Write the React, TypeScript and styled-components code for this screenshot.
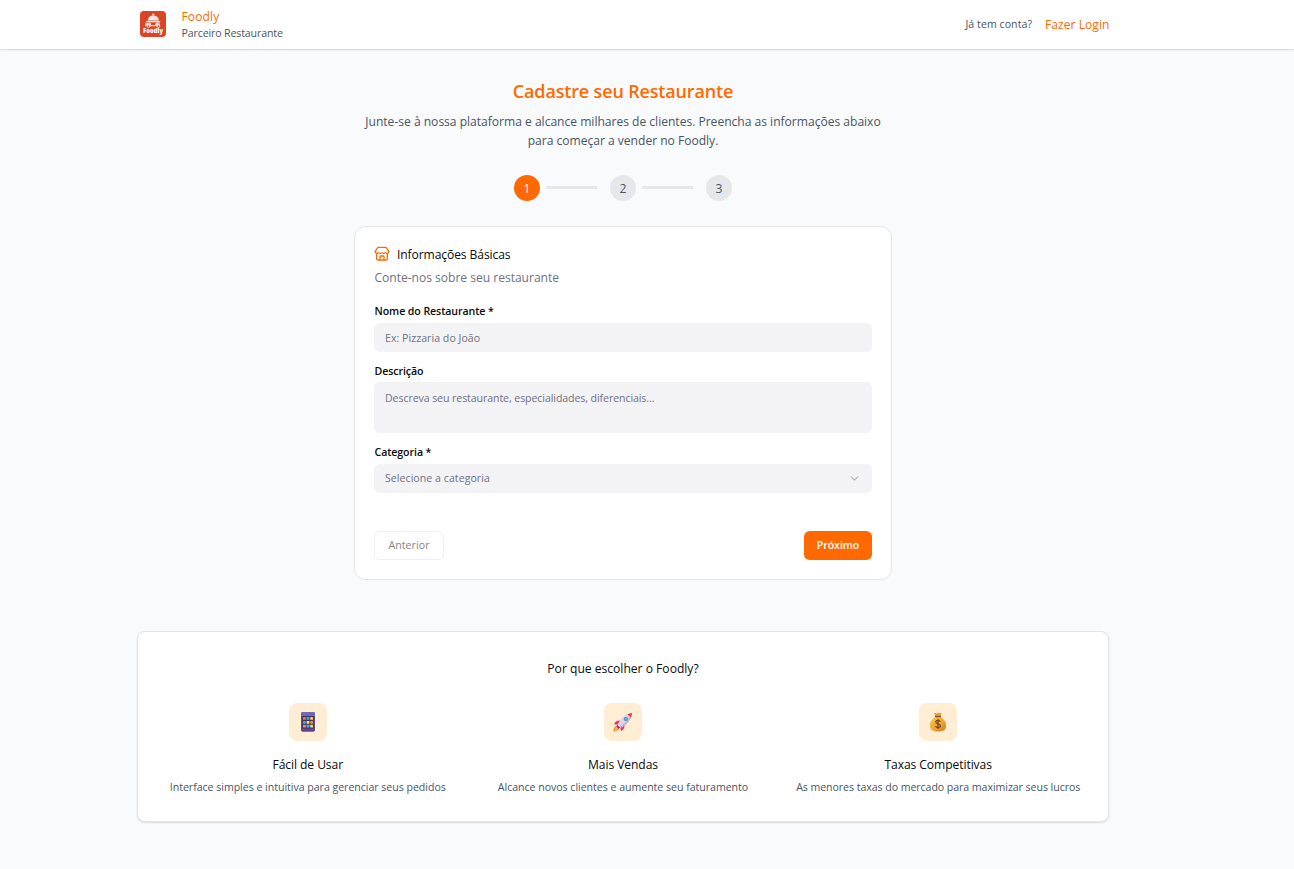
import React from "react";
import styled, { createGlobalStyle } from "styled-components";
import { ChevronDown, Store } from "lucide-react";

const Global = createGlobalStyle`
  *, *::before, *::after { box-sizing: border-box; }
  body {
    margin: 0;
    background: #f9fafb;
    color: #0a0a0a;
    font-family: "Open Sans", "Noto Sans", sans-serif;
    font-size: 12.1px;
    line-height: 19.2px;
  }
  h1, h2, h3, p { margin: 0; font-weight: 400; font-size: inherit; }
  input, textarea, button { font-family: inherit; }
`;

const Page = styled.div`
  min-height: 869px;
  background: #f9fafb;
`;

const Header = styled.header`
  height: 49px;
  padding: 0 184.5px 0 140px;
  background: #fff;
  box-shadow: 0 1px 2px rgba(0, 0, 0, 0.1), 0 1px 1px rgba(0, 0, 0, 0.04);
  display: flex;
  align-items: center;
  justify-content: space-between;

  svg { margin-top: -1px; }
`;

const Brand = styled.div`
  display: flex;
  align-items: center;
  gap: 15.5px;
`;

const BrandName = styled.h1`
  color: #ff6900;
  line-height: 17px;
  letter-spacing: 0.1px;
`;

const Small = styled.p<{ $spacing?: number }>`
  font-size: 10.6px;
  line-height: 16px;
  color: #4a5565;
  letter-spacing: ${(p) => p.$spacing ?? 0}px;
`;

const Account = styled.div`
  display: flex;
  align-items: center;
  gap: 13px;
`;

const LoginLink = styled.a`
  color: #ff6900;
  letter-spacing: 0.03px;
`;

const Main = styled.main`
  width: 1246px;
  padding: 32px 137px 0;
  display: flex;
  flex-direction: column;
  align-items: center;
`;

const Title = styled.h2`
  font-size: 18px;
  line-height: 20px;
  font-weight: 600;
  letter-spacing: -0.16px;
  color: #ff6900;
`;

const Intro = styled.p`
  width: 538px;
  margin-top: 11px;
  text-align: center;
  letter-spacing: -0.02px;
  color: #4a5565;
`;

const Steps = styled.div`
  display: flex;
  align-items: center;
  margin-top: 25px;
`;

const Step = styled.div<{ $active?: boolean }>`
  width: 26px;
  height: 26px;
  border-radius: 50%;
  display: flex;
  align-items: center;
  justify-content: center;
  background: ${(p) => (p.$active ? "#ff6900" : "#e5e7eb")};
  color: ${(p) => (p.$active ? "#fff" : "#4a5565")};
`;

const StepLine = styled.div`
  width: 51px;
  height: 3px;
  margin: 0 13px 1px 6px;
  background: #e5e7eb;
`;

const FormCard = styled.section`
  width: 538px;
  height: 354px;
  margin-top: 25px;
  padding: 18px 19px 19px;
  border: 1px solid #e5e5e6;
  border-radius: 11.2px;
  background: #fff;
  display: flex;
  flex-direction: column;
`;

const CardTitle = styled.h3`
  display: flex;
  align-items: center;
  gap: 7px;
  line-height: 19px;
  letter-spacing: -0.1px;

  svg { color: #ff6900; margin-top: -1px; }
`;

const CardNote = styled.p`
  margin-top: 4px;
  letter-spacing: -0.03px;
  padding-left: 0.5px;
  color: #717182;
`;

const Field = styled.div<{ $top: number; $gap?: number }>`
  display: flex;
  flex-direction: column;
  gap: ${(p) => p.$gap ?? 6}px;
  margin-top: ${(p) => p.$top}px;
`;

const Label = styled.label`
  font-size: 10.6px;
  line-height: 12px;
  font-weight: 600;
  padding-left: 0.5px;
  letter-spacing: -0.08px;
`;

const Input = styled.input`
  height: 29px;
  padding: 1px 11px 0;
  border: 0;
  border-radius: 5.6px;
  background: #f3f3f5;
  font-size: 10.6px;
  &::placeholder { color: #717182; opacity: 1; letter-spacing: 0.03px; }
`;

const TextArea = styled.textarea`
  height: 51px;
  padding: 8px 11px;
  border: 0;
  border-radius: 5.6px;
  background: #f3f3f5;
  resize: none;
  font-size: 10.6px;
  line-height: 16px;
  &::placeholder { color: #717182; opacity: 1; letter-spacing: -0.09px; }
`;

const Select = styled.div`
  height: 29px;
  padding: 0 11px;
  border-radius: 5.6px;
  background: #f3f3f5;
  display: flex;
  align-items: center;
  justify-content: space-between;
  font-size: 10.6px;
  letter-spacing: 0.04px;
  color: #717182;

  svg { opacity: 0.5; }
`;

const Actions = styled.div`
  display: flex;
  justify-content: space-between;
  margin-top: auto;
`;

const Button = styled.button<{ $primary?: boolean }>`
  width: ${(p) => (p.$primary ? 68 : 70)}px;
  height: 29px;
  padding: 0 0 1px;
  border-radius: 5.6px;
  border: ${(p) => (p.$primary ? "0" : "1px solid #f0f0f0")};
  background: ${(p) => (p.$primary ? "#ff6900" : "#fff")};
  color: ${(p) => (p.$primary ? "#fff" : "#848484")};
  font-size: 10.6px;
  font-weight: ${(p) => (p.$primary ? 600 : 500)};
  letter-spacing: ${(p) => (p.$primary ? -0.08 : 0.05)}px;
`;

const Benefits = styled.section`
  width: 972px;
  height: 191px;
  margin-top: 51px;
  padding: 27px 25px;
  border: 1px solid #e4e5e7;
  border-radius: 8px;
  background: #fff;
  box-shadow: 0 1px 2px rgba(0, 0, 0, 0.12);
  text-align: center;
`;

const BenefitGrid = styled.div`
  display: grid;
  grid-template-columns: repeat(3, 1fr);
  gap: 25.6px;
  margin-top: 24px;
`;

const Benefit = styled.div`
  display: flex;
  flex-direction: column;
  align-items: center;
  white-space: nowrap;
`;

const IconTile = styled.div`
  width: 38px;
  height: 38px;
  border-radius: 8px;
  background: #ffedd4;
  display: flex;
  align-items: center;
  justify-content: center;
  margin-bottom: 14px;
`;

const BenefitTitle = styled.h3`
  margin-bottom: 5px;
  letter-spacing: -0.08px;
`;

const Logo = () => (
  <svg width="26" height="26" viewBox="0 0 26 26">
    <rect width="26" height="26" rx="4" fill="#dc4426" />
    <circle cx="13.3" cy="3.6" r="1" fill="#fff" />
    <path d="M7.700 9.600a5.500 5.300 0 0 1 11.200 0z" fill="#fbe6e0" />
    <path d="M6.200 10h14v1.200h-14z" fill="#fff" />
    <path d="M5.500 11.700h5.500v2.300h3.700l1.600-2.500h3l1 3.800h-15z" fill="#f8d5cb" />
    <circle cx="8.600" cy="15.200" r="1.300" fill="#dc4426" stroke="#fff" strokeWidth=".8" />
    <circle cx="18.400" cy="15.200" r="1.300" fill="#dc4426" stroke="#fff" strokeWidth=".8" />
    <text x="13" y="22" textAnchor="middle" textLength="20" lengthAdjust="spacingAndGlyphs" fontSize="6.500" fontWeight="800" fill="#fff">Foodly</text>
  </svg>
);

const keyColors = ["#f4743b", "#21b5ee", "#fbd149", "#21b5ee", "#ffe35c", "#f98b3c", "#f98b5c", "#21c4f4", "#ffd84a"];

const PhoneIcon = () => (
  <svg width="20" height="20" viewBox="0 0 20 20">
    <rect x="3" y=".3" width="14" height="19.2" rx="1.4" fill="#5c4a8e" />
    <path d="M4.4.3h11.2A1.4 1.4 0 0 1 17 1.7V4H3V1.700A1.400 1.400 0 0 1 4.400.3z" fill="#6f68b8" />
    <rect x="4.300" y="4" width="11.400" height="12.500" fill="#46325f" />
    <path d="M3 17h14v1.100a1.400 1.400 0 0 1-1.400 1.400H4.400A1.400 1.400 0 0 1 3 18.100z" fill="#6c3f94" />
    {keyColors.map((color, i) => (
      <rect key={i} x={5 + (i % 3) * 3.6} y={5 + Math.floor(i / 3) * 3.9} width="2.800" height="2.800" rx=".4" fill={color} />
    ))}
  </svg>
);

const RocketIcon = () => (
  <svg width="20" height="20" viewBox="0 0 20 20">
    <path d="M4.300 13.500C1.500 14 .5 16 .3 19.400c3.200 0 5.400-1 6-3.300z" fill="#f9923b" />
    <path d="M4.500 14.500c-1.600.6-2.300 1.700-2.500 3.200 1.500-.2 2.600-.7 3.300-2z" fill="#ffc247" />
    <path d="M7.300 8.600C4 8.500 2.200 9.600 1 12.200l4.600.6z" fill="#e8366b" />
    <path d="M11.500 12.800c.2 3.100-.8 5.100-3.500 6.400l-.8-4.900z" fill="#e8366b" />
    <path d="M4.500 13.200C6.400 7.500 11 2.200 19 .9c-.7 7.600-6.300 12.900-12 15z" fill="#dcd5e5" />
    <path d="M5.200 15C9.500 13.800 15.200 8.500 19 .9c-.7 7.600-6.300 12.900-12 15z" fill="#bfb3ce" />
    <path d="M14.300 2.300C15.800 1.500 17.300 1 19 .9c-.1 1.700-.5 3.200-1.100 4.600z" fill="#ee3457" />
    <path d="M4.300 12.700l3.200 3.200-2.100.9-2-2z" fill="#c62b63" />
    <circle cx="12.800" cy="7" r="2.100" fill="#4d7db5" />
    <circle cx="12.800" cy="7" r="1.300" fill="#55b7ed" />
  </svg>
);

const MoneyIcon = () => (
  <svg width="20" height="20" viewBox="0 0 20 20">
    <defs>
      <linearGradient id="bag" x1="0" y1="0" x2="1" y2="1">
        <stop offset="0" stopColor="#ffc83f" />
        <stop offset=".6" stopColor="#eea32c" />
        <stop offset="1" stopColor="#cc7429" />
      </linearGradient>
    </defs>
    <path d="M6 1.400c1.300-.7 2.200.1 3.400-.5 1.300-.6 2.300.2 4.500.1L12.600 4H7.300z" fill="#eda435" />
    <path d="M7.600 4.800h4.800c3.200 1.700 5.600 5 5.600 8.900 0 4.200-3 5.700-8 5.700s-8-1.500-8-5.700c0-3.900 2.400-7.200 5.600-8.900z" fill="url(#bag)" />
    <rect x="6.900" y="3.700" width="6.200" height="1.600" rx=".7" fill="#875044" />
    <path d="M12.300 9.700c-.4-.9-1.200-1.300-2.300-1.300-1.300 0-2.200.6-2.200 1.700 0 2.500 4.600 1.100 4.600 3.600 0 1.100-1 1.800-2.300 1.800-1.300 0-2.200-.5-2.600-1.500M10 7v10" fill="none" stroke="#6e4738" strokeWidth="1.200" />
  </svg>
);

const benefits = [
  { icon: <PhoneIcon />, title: "Fácil de Usar", text: "Interface simples e intuitiva para gerenciar seus pedidos", spacing: -0.03 },
  { icon: <RocketIcon />, title: "Mais Vendas", text: "Alcance novos clientes e aumente seu faturamento", spacing: -0.03 },
  { icon: <MoneyIcon />, title: "Taxas Competitivas", text: "As menores taxas do mercado para maximizar seus lucros", spacing: -0.06 },
];

export default function App() {
  return (
    <Page>
      <Global />
      <Header>
        <Brand>
          <Logo />
          <div>
            <BrandName>Foodly</BrandName>
            <Small $spacing={-0.13}>Parceiro Restaurante</Small>
          </div>
        </Brand>
        <Account>
          <Small $spacing={0.05}>Já tem conta?</Small>
          <LoginLink>Fazer Login</LoginLink>
        </Account>
      </Header>
      <Main>
        <Title>Cadastre seu Restaurante</Title>
        <Intro>
          Junte-se à nossa plataforma e alcance milhares de clientes. Preencha as informações abaixo
          <br />
          para começar a vender no Foodly.
        </Intro>
        <Steps>
          <Step $active>1</Step>
          <StepLine />
          <Step>2</Step>
          <StepLine />
          <Step>3</Step>
        </Steps>
        <FormCard>
          <CardTitle>
            <Store size={16} />
            Informações Básicas
          </CardTitle>
          <CardNote>Conte-nos sobre seu restaurante</CardNote>
          <Field $top={17}>
            <Label>Nome do Restaurante *</Label>
            <Input placeholder="Ex: Pizzaria do João" />
          </Field>
          <Field $top={13} $gap={5}>
            <Label>Descrição</Label>
            <TextArea placeholder="Descreva seu restaurante, especialidades, diferenciais..." />
          </Field>
          <Field $top={13}>
            <Label>Categoria *</Label>
            <Select>
              Selecione a categoria
              <ChevronDown size={13} />
            </Select>
          </Field>
          <Actions>
            <Button>Anterior</Button>
            <Button $primary>Próximo</Button>
          </Actions>
        </FormCard>
        <Benefits>
          <h3>Por que escolher o Foodly?</h3>
          <BenefitGrid>
            {benefits.map((b) => (
              <Benefit key={b.title}>
                <IconTile>{b.icon}</IconTile>
                <BenefitTitle>{b.title}</BenefitTitle>
                <Small $spacing={b.spacing}>{b.text}</Small>
              </Benefit>
            ))}
          </BenefitGrid>
        </Benefits>
      </Main>
    </Page>
  );
}
